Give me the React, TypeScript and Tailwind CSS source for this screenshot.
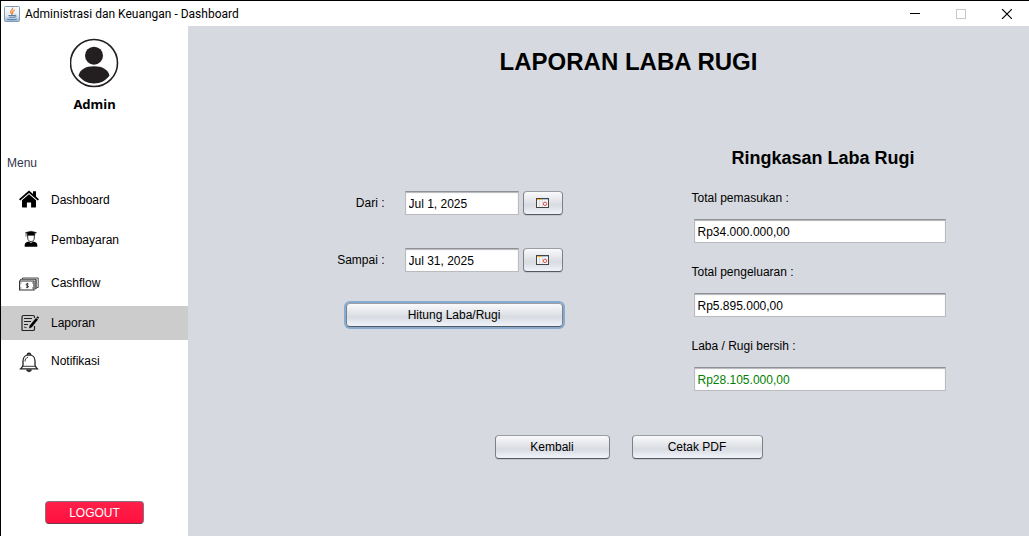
import React, { useState } from "react";

type IconProps = { className?: string };

const JavaIcon = () => (
  <svg width="16" height="16" viewBox="0 0 16 16" aria-hidden="true">
    <defs>
      <linearGradient id="javaTile" x1="0" y1="0" x2="0" y2="1">
        <stop offset="0" stopColor="#fdfdfe" />
        <stop offset="0.6" stopColor="#e3eaf1" />
        <stop offset="1" stopColor="#9db6cf" />
      </linearGradient>
    </defs>
    <rect x="0.5" y="0.5" width="15" height="15" rx="1" fill="url(#javaTile)" stroke="#7f9cba" />
    <path d="M8.6 2c.5 1.4-2.4 2.3-2 3.9.2.9 1.1 1.5 1.2 2.4M10.4 4.2c-1.3.5-2.2 1.1-1.9 2 .3.7.5 1.1 0 1.8" fill="none" stroke="#ee8130" strokeWidth="1.2" strokeLinecap="round" />
    <path d="M4.8 9.5h6M5.3 11.2h5M11 9.2c1.7-.3 1.7 1.5-.2 2M3.6 13.3c2.5.6 6.5.6 8.8-.1" fill="none" stroke="#3f6f9f" strokeWidth=".9" strokeLinecap="round" />
  </svg>
);

const AvatarIcon = () => (
  <svg width="50" height="50" viewBox="0 0 50 50" aria-hidden="true">
    <circle cx="24" cy="25" r="23.5" fill="#fff" stroke="#231f20" strokeWidth="1.6" />
    <circle cx="24" cy="17.7" r="9" fill="#231f20" />
    <path d="M8.500 37.500C10 31.500 15.500 28.200 24 28.200s14 3.300 15.500 9.300C36 42.500 30.500 45.500 24 45.500S12 42.500 8.500 37.500Z" fill="#231f20" />
  </svg>
);

const HouseIcon = ({ className }: IconProps) => (
  <svg className={className} width="20" height="20" viewBox="0 0 20 20" aria-hidden="true">
    <path d="M10 .5 6.2 3.8 0 9.3l1.2 1.3L10 2.9l8.8 7.7L20 9.3l-3-2.7V1.2h-3V4Z" />
    <path d="M10 4.2 3 10.3V16.5c0 .6.4 1 1 1h3.9v-5h4.2v5H16c.6 0 1-.4 1-1v-6.2Z" />
  </svg>
);

const StudentIcon = ({ className }: IconProps) => (
  <svg className={className} width="20" height="20" viewBox="0 0 20 20" aria-hidden="true">
    <path d="M12 1.2 6.5 2.6l1.7.8V5.7h7.6V3.4l1.7-.8ZM7 2.7v4" stroke="#222" strokeWidth=".6" />
    <path d="M8.7 5.7V8c0 2 1.5 3.7 3.3 3.7s3.3-1.7 3.3-3.7V5.7" fill="#fff" stroke="#222" strokeWidth=".9" />
    <path d="M5.7 16.7V15c0-2 1.4-2.9 4-3.5l2.3 1.5 2.3-1.5c2.6.6 4 1.5 4 3.5v1.7Z" />
  </svg>
);

const CashIcon = ({ className }: IconProps) => (
  <svg className={className} width="20" height="20" viewBox="0 0 20 20" fill="none" stroke="#333" aria-hidden="true">
    <path d="M.6 8h14.400v9H.6Z" strokeWidth="1.2" />
    <path d="M1.5 7.5V6.3H17v9.500h-1M3.500 6V5h15.700v9.500H18M17 6.300v9.500" strokeWidth=".9" />
    <path d="M2 9.500v1M13.500 9.500v1M2 15.500v-1M13.500 15.500v-1" strokeWidth=".8" />
    <path d="M9.500 11c-1.500-.9-2.700.2-2.200 1 .5.9 2 .5 2.200 1.400.2 1-1.400 1.500-2.500.6M8.300 9.900v5.300" />
  </svg>
);

const ReportIcon = ({ className }: IconProps) => (
  <svg className={className} width="20" height="20" viewBox="0 0 20 20" fill="none" stroke="#222" aria-hidden="true">
    <path d="M15.500 5V4c0-1-.5-1.500-1.500-1.500H4.500C3.500 2.500 3 3 3 4v11.500c0 1-.2 2 .8 2H14c1 0 1.500-.6 1.500-1.600V13" strokeWidth="1.2" />
    <path d="M5 5.500h8M5 8.500h7M5 11.500h4M5 14.500c1-1.200 1.500.8 2.500 0" />
    <path d="m10 15.500.7-3L17 5l2 1.600-6.200 7.700Z" fill="#000" stroke="none" />
    <path d="m17.500 4.400 1-1.100 1.500 1.300-.7 1.200Z" fill="#000" stroke="none" />
  </svg>
);

const BellIcon = ({ className }: IconProps) => (
  <svg className={className} width="20" height="24" viewBox="0 0 20 24" fill="none" stroke="#222" strokeWidth="1.3" aria-hidden="true">
    <path d="M8.300 6.200C8.300 3.600 11.700 3.600 11.700 6.200M10 5.900c-3.700 0-6 2.600-6 6v4c0 1.600-1.200 2.700-2.300 3.900h16.600c-1.100-1.200-2.300-2.300-2.300-3.900v-4c0-3.400-2.300-6-6-6Z" />
    <path d="M6 12.500c0-2.200 1.100-3.800 3-4.300M3.500 17.300h13" strokeWidth=".9" />
    <path d="M7.500 20.700c.3 2.700 4.700 2.700 5 0Z" fill="#333" strokeWidth=".6" />
  </svg>
);

const CalendarIcon = () => (
  <svg width="14" height="12" viewBox="0 0 14 12" aria-hidden="true">
    <rect x="0.5" y="1.5" width="12" height="9" fill="#f4f4f4" stroke="#444" />
    <path d="M1 2.500h5" stroke="#f0b43c" />
    <path d="M6 2.500h6" stroke="#a9c4e6" />
    <path d="M3.500 3v7M6.500 3v7" stroke="#dcdcdc" />
    <circle cx="9" cy="6.8" r="1.7" fill="#fff" stroke="#e04848" />
  </svg>
);

const menu = [
  { label: "Dashboard", Icon: HouseIcon, row: "h-10" },
  { label: "Pembayaran", Icon: StudentIcon, row: "h-10" },
  { label: "Cashflow", Icon: CashIcon, row: "h-[46px]" },
  { label: "Laporan", Icon: ReportIcon, row: "h-[34px] bg-[#cccccc]" },
  { label: "Notifikasi", Icon: BellIcon, row: "h-[42px]" },
];

const buttonClass =
  "flex h-6 items-center justify-center rounded border border-[#7d8086] border-t-[#9a9da3] border-b-[#55585e] bg-linear-to-b from-[#fafafc] via-[#d8dbe1] via-60% to-[#f1f4fa] shadow-[0_1px_0_#c3c6cc]";
const fieldClass =
  "h-6 border border-[#b9bbbf] border-t-[#8f9196] bg-white px-[3px] pt-0.5 shadow-[inset_0_1px_1px_#b4b5b9] outline-none";

function DateRow({ id, label, initial }: { id: string; label: string; initial: string }) {
  const [value, setValue] = useState(initial);
  return (
    <div className="flex items-center">
      <label htmlFor={id} className="mr-5 flex-1 text-right">{label}</label>
      <input id={id} value={value} onChange={(e) => setValue(e.target.value)} className={`${fieldClass} mr-1 w-[114px]`} />
      <button type="button" aria-label="Pilih tanggal" className={`${buttonClass} w-10`}>
        <CalendarIcon />
      </button>
    </div>
  );
}

function TotalField({ id, label, value, color }: { id: string; label: string; value: string; color: string }) {
  return (
    <div className="flex flex-col gap-3">
      <label htmlFor={id} className="leading-[18px]">{label}</label>
      <input id={id} readOnly value={value} className={`${fieldClass} ml-0.5 ${color}`} />
    </div>
  );
}

export default function App() {
  return (
    <div className="flex min-h-screen flex-col border-t border-l border-black bg-white font-['Liberation_Sans',Arial,sans-serif] text-[12px] text-black">
      <header className="flex h-[25px] items-center pl-[3px]">
        <JavaIcon />
        <span className="ml-[5px] font-[Roboto,sans-serif] text-[12px]">Administrasi dan Keuangan - Dashboard</span>
        <div className="ml-auto flex h-full">
          <button type="button" aria-label="Minimize" className="flex w-[46px] items-center justify-center">
            <svg width="12" height="10" viewBox="0 0 12 10"><path d="M2 4.500h10" stroke="#000" /></svg>
          </button>
          <button type="button" aria-label="Maximize" disabled className="flex w-[46px] items-center justify-center">
            <svg width="12" height="10" viewBox="0 0 12 10"><rect x="2.5" y=".5" width="9" height="9" fill="none" stroke="#c8c8c8" /></svg>
          </button>
          <button type="button" aria-label="Close" className="flex w-[46px] items-center justify-center">
            <svg width="12" height="10" viewBox="0 0 12 10"><path d="M2 0l10 10M12 0L2 10" stroke="#000" strokeWidth="1.1" /></svg>
          </button>
        </div>
      </header>

      <div className="flex flex-1">
        <aside className="flex w-[187px] shrink-0 flex-col">
          <div className="flex flex-col items-center pt-3">
            <AvatarIcon />
            <span className="mt-1.5 font-['Noto_Sans',sans-serif] text-[13px] leading-5 font-bold">Admin</span>
          </div>
          <h2 className="mt-10 pl-1.5 leading-[18px] text-[#33334d]">Menu</h2>
          <nav className="mt-2">
            {menu.map(({ label, Icon, row }) => (
              <a key={label} href="#" className={`flex items-center gap-3 pl-[18px] ${row}`}>
                <Icon />
                {label}
              </a>
            ))}
          </nav>
          <button type="button" className="mx-11 mt-auto mb-3 h-[23px] rounded border border-[#86737e] border-b-[#6b3b48] bg-linear-to-b from-[#ff1f4a] to-[#ff0f3f] text-white">
            LOGOUT
          </button>
        </aside>

        <main className="flex flex-1 flex-col items-center bg-[#d6d9df] pt-5 pl-10">
          <h1 className="text-[24px] leading-8 font-bold">LAPORAN LABA RUGI</h1>

          <div className="mt-[68px] flex gap-[129px]">
            <form className="w-[251px] pt-[45px]" onSubmit={(e) => e.preventDefault()}>
              <div className="flex flex-col gap-[33px]">
                <DateRow id="dari" label="Dari :" initial="Jul 1, 2025" />
                <DateRow id="sampai" label="Sampai :" initial="Jul 31, 2025" />
              </div>
              <button type="submit" className={`${buttonClass} mt-[31px] ml-auto w-[217px] ring-2 ring-[#86abd0]`}>
                Hitung Laba/Rugi
              </button>
            </form>

            <section className="w-[254px]">
              <h2 className="pl-10 text-[18px] leading-6 font-bold">Ringkasan Laba Rugi</h2>
              <div className="mt-[19px] flex flex-col gap-5">
                <TotalField id="pemasukan" label="Total pemasukan :" value="Rp34.000.000,00" color="text-black" />
                <TotalField id="pengeluaran" label="Total pengeluaran :" value="Rp5.895.000,00" color="text-black" />
                <TotalField id="bersih" label="Laba / Rugi bersih :" value="Rp28.105.000,00" color="text-[#008000]" />
              </div>
            </section>
          </div>

          <div className="mt-11 flex gap-[22px]">
            <button type="button" className={`${buttonClass} w-[115px]`}>Kembali</button>
            <button type="button" className={`${buttonClass} w-[131px]`}>Cetak PDF</button>
          </div>
        </main>
      </div>
    </div>
  );
}
